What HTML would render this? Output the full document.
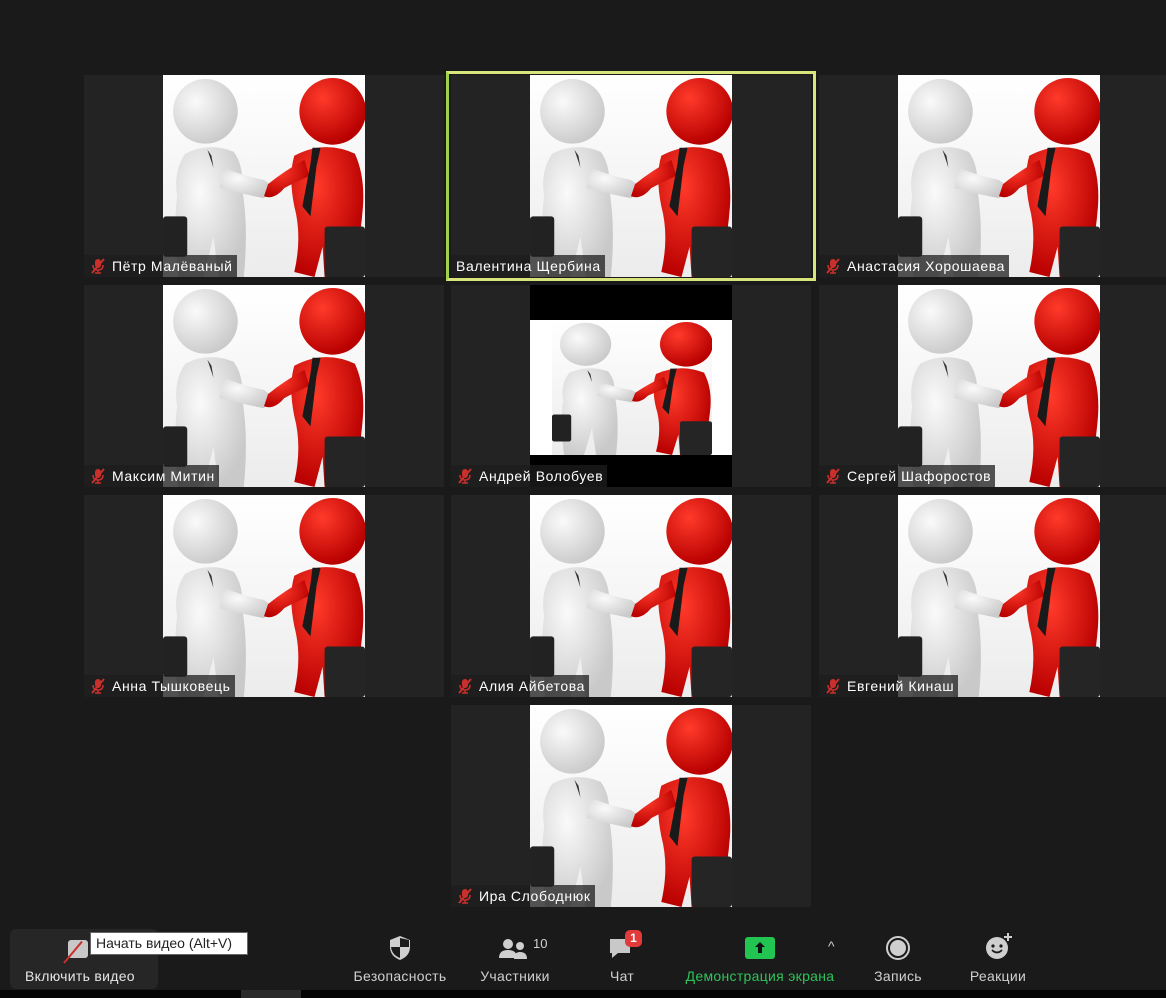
<!DOCTYPE html>
<html><head><meta charset="utf-8"><style>
*{margin:0;padding:0;box-sizing:border-box}
body{width:1166px;height:998px;background:#1a1a1a;position:relative;overflow:hidden;font-family:"Liberation Sans","DejaVu Sans",sans-serif}
.tile{position:absolute;width:360px;height:202px;background:#232323;overflow:hidden}
.img{position:absolute;left:79px;top:0;width:202px;height:202px;background:#fff}
.img svg{width:100%;height:100%;display:block}
.lbl{position:absolute;left:0;bottom:0;height:22px;background:rgba(30,30,30,.75);color:#fff;font-size:14px;letter-spacing:0.6px;line-height:22px;padding:0 4px 0 28px;white-space:nowrap}
.lbl svg{position:absolute;left:6px;top:3px}
.tb{position:absolute;top:928px;text-align:center;color:#d0d0d0;font-size:14px}
.tb .t{position:absolute;top:40px;white-space:nowrap;transform:translateX(-50%);letter-spacing:0.3px}
</style></head><body>
<svg width="0" height="0" style="position:absolute">
<defs>
<radialGradient id="wg" cx=".35" cy=".35" r=".7"><stop offset="0" stop-color="#fafafa"/><stop offset="1" stop-color="#c9c9c9"/></radialGradient>
<radialGradient id="rg" cx=".35" cy=".3" r=".7"><stop offset="0" stop-color="#ff3a2a"/><stop offset="1" stop-color="#b80000"/></radialGradient>
<linearGradient id="bg" x1="0" y1="0" x2="0" y2="1"><stop offset="0" stop-color="#fff"/><stop offset="1" stop-color="#ececec"/></linearGradient>
<symbol id="hs" viewBox="0 0 200 200" preserveAspectRatio="none">
<rect width="200" height="200" fill="url(#bg)"/>
<path d="M22 78 Q45 66 70 76 Q80 90 78 110 Q85 150 80 200 L55 200 L50 160 L40 200 L15 200 Q10 150 14 120 Q10 95 22 78Z" fill="url(#wg)"/>
<path d="M60 92 Q80 100 100 104 L108 110 L100 122 Q80 118 56 112Z" fill="url(#wg)"/>
<circle cx="42" cy="36" r="32" fill="url(#wg)"/>
<path d="M44 74 L50 92 L48 80Z" fill="#333"/>
<path d="M130 80 Q160 64 190 78 Q200 100 198 130 Q195 170 185 200 L160 200 L158 170 L150 200 L130 195 Q138 160 130 130 Q124 100 130 80Z" fill="url(#rg)"/>
<path d="M140 84 Q120 95 104 108 L100 120 Q110 124 120 112 Q135 104 145 100Z" fill="url(#rg)"/>
<circle cx="168" cy="36" r="33" fill="url(#rg)"/>
<path d="M148 72 L156 72 L152 90 L146 140 L138 130 L146 88Z" fill="#1a1a1a"/>
<rect x="0" y="140" width="24" height="40" rx="3" fill="#222"/>
<rect x="160" y="150" width="40" height="50" rx="3" fill="#252525"/>
</symbol>
<symbol id="mic" viewBox="0 0 16 16">
<rect x="5" y="1" width="6" height="9" rx="3" fill="#c9302c"/>
<path d="M3 7 Q3 12 8 12 Q13 12 13 7 M8 12 V15 M5 15 H11" stroke="#c9302c" stroke-width="1.5" fill="none"/>
<path d="M2 15 L14 1" stroke="#c9302c" stroke-width="2"/>
</symbol>
</defs></svg>

<div class="tile" style="left:84px;top:75px"><div class="img"><svg><use href="#hs"/></svg></div><div class="lbl"><svg width="16" height="16"><use href="#mic"/></svg>Пётр Малёваный</div></div>
<div class="tile" style="left:451px;top:75px"><div class="img"><svg><use href="#hs"/></svg></div><div class="lbl" style="padding-left:5px">Валентина Щербина</div></div>
<div style="position:absolute;left:446px;top:71px;width:370px;height:210px;border:3px solid #d8e57a;border-left-color:#9fd24a"></div>
<div class="tile" style="left:819px;top:75px"><div class="img"><svg><use href="#hs"/></svg></div><div class="lbl"><svg width="16" height="16"><use href="#mic"/></svg>Анастасия Хорошаева</div></div>

<div class="tile" style="left:84px;top:285px"><div class="img"><svg><use href="#hs"/></svg></div><div class="lbl"><svg width="16" height="16"><use href="#mic"/></svg>Максим Митин</div></div>
<div class="tile" style="left:451px;top:285px"><div class="img" style="background:#000"><div style="position:absolute;left:0;top:35px;width:202px;height:135px;background:#fff"><svg style="position:absolute;left:22px;top:0;width:160px;height:135px"><use href="#hs"/></svg></div></div><div class="lbl"><svg width="16" height="16"><use href="#mic"/></svg>Андрей Волобуев</div></div>
<div class="tile" style="left:819px;top:285px"><div class="img"><svg><use href="#hs"/></svg></div><div class="lbl"><svg width="16" height="16"><use href="#mic"/></svg>Сергей Шафоростов</div></div>

<div class="tile" style="left:84px;top:495px"><div class="img"><svg><use href="#hs"/></svg></div><div class="lbl"><svg width="16" height="16"><use href="#mic"/></svg>Анна Тышковець</div></div>
<div class="tile" style="left:451px;top:495px"><div class="img"><svg><use href="#hs"/></svg></div><div class="lbl"><svg width="16" height="16"><use href="#mic"/></svg>Алия Айбетова</div></div>
<div class="tile" style="left:819px;top:495px"><div class="img"><svg><use href="#hs"/></svg></div><div class="lbl"><svg width="16" height="16"><use href="#mic"/></svg>Евгений Кинаш</div></div>

<div class="tile" style="left:451px;top:705px"><div class="img"><svg><use href="#hs"/></svg></div><div class="lbl"><svg width="16" height="16"><use href="#mic"/></svg>Ира Слободнюк</div></div>

<div style="position:absolute;left:0;top:990px;width:1166px;height:8px;background:#050505"></div>
<div style="position:absolute;left:241px;top:990px;width:60px;height:8px;background:#2a2a2a"></div>

<div style="position:absolute;left:10px;top:929px;width:148px;height:60px;background:#262626;border-radius:6px"></div>
<div style="position:absolute;left:68px;top:940px;width:20px;height:18px;background:#c8c8c8;border-radius:3px"></div>
<div style="position:absolute;left:64px;top:962px;width:28px;height:2px;background:#c9302c;transform:rotate(-50deg);transform-origin:left"></div>
<div style="position:absolute;left:90px;top:932px;width:158px;height:23px;background:#fff;border:1px solid #666;color:#222;font-size:14px;line-height:21px;padding-left:5px">Начать видео (Alt+V)</div>
<div style="position:absolute;left:25px;top:968px;color:#e6e6e6;font-size:14px;letter-spacing:0.3px">Включить видео</div>

<div class="tb" style="left:400px"><svg style="position:absolute;left:-12px;top:7px" width="24" height="26" viewBox="0 0 24 26"><path d="M12 1 L22 5 V12 Q22 21 12 25 Q2 21 2 12 V5Z" fill="#cfcfcf"/><path d="M12 3 V12 H21 V5Z M12 12 H3 Q4 20 12 23Z" fill="#1a1a1a"/></svg><div class="t">Безопасность</div></div>
<div class="tb" style="left:515px"><svg style="position:absolute;left:-16px;top:10px" width="32" height="22" viewBox="0 0 32 22"><circle cx="9" cy="6" r="5" fill="#cfcfcf"/><path d="M0 20 Q0 12 9 12 Q18 12 18 20Z" fill="#cfcfcf"/><circle cx="21" cy="8" r="4" fill="#cfcfcf"/><path d="M15 21 Q15 14 21 14 Q28 14 28 21Z" fill="#cfcfcf"/></svg><span style="position:absolute;left:18px;top:8px;font-size:13px;color:#d0d0d0">10</span><div class="t">Участники</div></div>
<div class="tb" style="left:622px"><svg style="position:absolute;left:-14px;top:8px" width="28" height="24" viewBox="0 0 28 24"><path d="M2 3 H22 V17 H10 L4 22 V17 H2Z" fill="#c8c8c8"/></svg><div style="position:absolute;left:3px;top:2px;width:17px;height:17px;background:#e23a3a;border-radius:5px;color:#fff;font-size:12px;font-weight:bold;line-height:17px;text-align:center">1</div><div class="t">Чат</div></div>
<div class="tb" style="left:760px"><div style="position:absolute;left:-15px;top:9px;width:30px;height:22px;background:#23c552;border-radius:3px"><svg width="30" height="22" viewBox="0 0 30 22"><path d="M15 5 L10 10 H13 V16 H17 V10 H20Z" fill="#111"/></svg></div><div class="t" style="color:#2ec35a">Демонстрация экрана</div></div>
<div style="position:absolute;left:828px;top:938px;color:#ccc;font-size:14px">^</div>
<div class="tb" style="left:898px"><svg style="position:absolute;left:-13px;top:7px" width="26" height="26"><circle cx="13" cy="13" r="11" fill="none" stroke="#cfcfcf" stroke-width="2"/><circle cx="13" cy="13" r="8" fill="#cfcfcf"/></svg><div class="t">Запись</div></div>
<div class="tb" style="left:998px"><svg style="position:absolute;left:-13px;top:4px" width="30" height="28" viewBox="0 0 30 28"><circle cx="12" cy="16" r="11" fill="#cfcfcf"/><circle cx="8" cy="14" r="1.6" fill="#1a1a1a"/><circle cx="16" cy="14" r="1.6" fill="#1a1a1a"/><path d="M7 18 Q12 23 17 18" stroke="#1a1a1a" stroke-width="1.8" fill="none"/><path d="M23 1 V9 M19 5 H27" stroke="#cfcfcf" stroke-width="2"/></svg><div class="t">Реакции</div></div>
</body></html>
